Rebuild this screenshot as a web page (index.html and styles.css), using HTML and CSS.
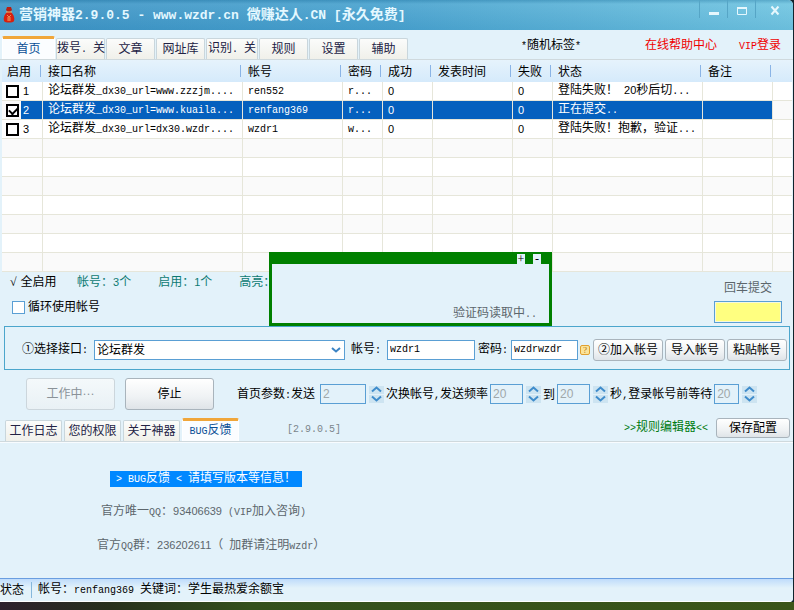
FILE: index.html
```html
<!DOCTYPE html>
<html lang="zh-CN">
  <head>
    <meta charset="UTF-8">
    <title>营销神器2.9.0.5</title>
    <link rel="stylesheet" href="styles.css">
  </head>
  <body>
    <div class="window">
      <header class="titlebar">
        <svg class="logo" width="12" height="18" viewBox="0 0 12 18">
          <path d="M4 1h4l1 3-2 2H5L3 4z" fill="#b81e12"/>
          <path d="M4 6h4c2 2 4 5 3 9-1 2-9 2-10 0-1-4 1-7 3-9z" fill="#d8200f"/>
          <path d="M3 6h6" stroke="#f0b868" stroke-width="1"/>
          <path d="M4 9l2 2 2-2M6 11v4M4 12h4M4 14h4" stroke="#f08a50" fill="none"/>
        </svg>
        <h1>营销神器<span class="mono">2.9.0.5 - www.wzdr.cn </span>微赚达人<span class="mono">.CN [</span>永久免费<span class="mono">]</span></h1>
        <div class="win-buttons">
          <button type="button" aria-label="最小化"><svg width="12" height="12" viewBox="0 0 12 12"><path d="M1 9.500h10" stroke="#e6f7fd" stroke-width="3"/></svg></button>
          <button type="button" aria-label="最大化"><svg width="12" height="12" viewBox="0 0 12 12"><path d="M1.500 3.500h9v7h-9z" fill="none" stroke="#e6f7fd"/><path d="M1 4h10" stroke="#e6f7fd" stroke-width="2"/></svg></button>
          <button type="button" aria-label="关闭"><svg width="12" height="12" viewBox="0 0 12 12"><path d="M2.500 2.500l7 8M9.500 2.500l-7 8" stroke="#e6f7fd" stroke-width="2"/></svg></button>
        </div>
      </header>

      <nav class="tabs main-tabs">
        <button type="button" class="tab active">首页</button>
        <button type="button" class="tab">拨号<span class="mono">. </span>关</button>
        <button type="button" class="tab">文章</button>
        <button type="button" class="tab">网址库</button>
        <button type="button" class="tab wide">识别<span class="mono">. </span>关</button>
        <button type="button" class="tab">规则</button>
        <button type="button" class="tab">设置</button>
        <button type="button" class="tab">辅助</button>
        <div class="top-links">
          <span class="random-tag"><span class="mono">*</span>随机标签<span class="mono">*</span></span>
          <a href="#">在线帮助中心</a>
          <a href="#"><span class="mono">VIP</span>登录</a>
        </div>
      </nav>

      <table class="accounts">
        <colgroup>
          <col class="c-on"><col class="c-api"><col class="c-user"><col class="c-pass"><col class="c-ok"><col class="c-time"><col class="c-fail"><col class="c-state"><col class="c-note"><col>
        </colgroup>
        <thead>
          <tr><th>启用</th><th>接口名称</th><th>帐号</th><th>密码</th><th>成功</th><th>发表时间</th><th>失败</th><th>状态</th><th>备注</th><th></th></tr>
        </thead>
        <tbody>
          <tr>
            <td><label><input type="checkbox"><span class="num">1</span></label></td>
            <td>论坛群发<span class="mono">_dx30_url=www.zzzjm....</span></td><td><span class="mono">ren552</span></td><td><span class="mono">r...</span></td><td><span class="num">0</span></td><td></td><td><span class="num">0</span></td><td>登陆失败！<span class="mono"> </span><span class="num">20</span>秒后切<span class="mono">...</span></td><td></td><td></td>
          </tr>
          <tr class="selected">
            <td><label><input type="checkbox" checked><span class="num">2</span></label></td>
            <td>论坛群发<span class="mono">_dx30_url=www.kuaila...</span></td><td><span class="mono">renfang369</span></td><td><span class="mono">r...</span></td><td><span class="num">0</span></td><td></td><td><span class="num">0</span></td><td>正在提交<span class="mono">..</span></td><td></td><td></td>
          </tr>
          <tr>
            <td><label><input type="checkbox"><span class="num">3</span></label></td>
            <td>论坛群发<span class="mono">_dx30_url=dx30.wzdr....</span></td><td><span class="mono">wzdr1</span></td><td><span class="mono">w...</span></td><td><span class="num">0</span></td><td></td><td><span class="num">0</span></td><td>登陆失败！抱歉，验证<span class="mono">...</span></td><td></td><td></td>
          </tr>
          <tr><td></td><td></td><td></td><td></td><td></td><td></td><td></td><td></td><td></td><td></td></tr>
          <tr><td></td><td></td><td></td><td></td><td></td><td></td><td></td><td></td><td></td><td></td></tr>
          <tr><td></td><td></td><td></td><td></td><td></td><td></td><td></td><td></td><td></td><td></td></tr>
          <tr><td></td><td></td><td></td><td></td><td></td><td></td><td></td><td></td><td></td><td></td></tr>
          <tr><td></td><td></td><td></td><td></td><td></td><td></td><td></td><td></td><td></td><td></td></tr>
          <tr><td></td><td></td><td></td><td></td><td></td><td></td><td></td><td></td><td></td><td></td></tr>
          <tr><td></td><td></td><td></td><td></td><td></td><td></td><td></td><td></td><td></td><td></td></tr>
        </tbody>
      </table>

      <section class="summary">
        <div class="summary-left">
          <div class="counts">
            <span class="all-on"><span>√</span><span>全启用</span></span>
            <span>帐号：<span class="num">3</span>个</span>
            <span>启用：<span class="num">1</span>个</span>
            <span>高亮：</span>
          </div>
          <label class="loop"><input type="checkbox">循环使用帐号</label>
        </div>
        <div class="captcha-entry">
          <label for="captcha">回车提交</label>
          <input type="text" id="captcha">
        </div>
        <div class="captcha-popup">
          <div class="popup-bar">
            <button type="button">+</button>
            <button type="button">-</button>
          </div>
          <p>验证码读取中<span class="mono">..</span></p>
        </div>
      </section>

      <form class="account-form">
        <label for="api">①选择接口<span class="mono">:</span></label>
        <div class="select-box">
          <select id="api"><option>论坛群发</option></select>
          <svg width="10" height="8" viewBox="0 0 10 8"><path d="M1 2l4 3.500 4-3.500" fill="none" stroke="#3c84c4" stroke-width="2"/></svg>
        </div>
        <label for="user">帐号<span class="mono">:</span></label>
        <input type="text" id="user" class="user" value="wzdr1">
        <label for="pass">密码<span class="mono">:</span></label>
        <input type="text" id="pass" class="pass" value="wzdrwzdr">
        <span class="help">?</span>
        <div class="form-buttons">
          <button type="button" class="btn">②加入帐号</button>
          <button type="button" class="btn">导入帐号</button>
          <button type="button" class="btn">粘贴帐号</button>
        </div>
      </form>

      <section class="controls">
        <button type="button" class="btn big" disabled>工作中···</button>
        <button type="button" class="btn big">停止</button>
        <div class="params">
          <label for="send">首页参数<span class="mono">:</span>发送</label>
          <input type="text" id="send" class="send" value="2" disabled>
          <span class="spin">
            <button type="button" aria-label="增加"><svg width="11" height="7" viewBox="0 0 11 7"><path d="M1 5.500l4.500-4 4.500 4" fill="none" stroke="#3f8ccb" stroke-width="2"/></svg></button>
            <button type="button" aria-label="减少"><svg width="11" height="7" viewBox="0 0 11 7"><path d="M1 1.500l4.500 4 4.500-4" fill="none" stroke="#3f8ccb" stroke-width="2"/></svg></button>
          </span>
          <label for="from">次换帐号<span class="mono">,</span>发送频率</label>
          <input type="text" id="from" class="rate" value="20" disabled>
          <span class="spin">
            <button type="button" aria-label="增加"><svg width="11" height="7" viewBox="0 0 11 7"><path d="M1 5.500l4.500-4 4.500 4" fill="none" stroke="#3f8ccb" stroke-width="2"/></svg></button>
            <button type="button" aria-label="减少"><svg width="11" height="7" viewBox="0 0 11 7"><path d="M1 1.500l4.500 4 4.500-4" fill="none" stroke="#3f8ccb" stroke-width="2"/></svg></button>
          </span>
          <label for="to">到</label>
          <input type="text" id="to" class="rate" value="20" disabled>
          <span class="spin">
            <button type="button" aria-label="增加"><svg width="11" height="7" viewBox="0 0 11 7"><path d="M1 5.500l4.500-4 4.500 4" fill="none" stroke="#3f8ccb" stroke-width="2"/></svg></button>
            <button type="button" aria-label="减少"><svg width="11" height="7" viewBox="0 0 11 7"><path d="M1 1.500l4.500 4 4.500-4" fill="none" stroke="#3f8ccb" stroke-width="2"/></svg></button>
          </span>
          <label for="wait">秒<span class="mono">,</span>登录帐号前等待</label>
          <input type="text" id="wait" class="wait" value="20" disabled>
          <span class="spin">
            <button type="button" aria-label="增加"><svg width="11" height="7" viewBox="0 0 11 7"><path d="M1 5.500l4.500-4 4.500 4" fill="none" stroke="#3f8ccb" stroke-width="2"/></svg></button>
            <button type="button" aria-label="减少"><svg width="11" height="7" viewBox="0 0 11 7"><path d="M1 1.500l4.500 4 4.500-4" fill="none" stroke="#3f8ccb" stroke-width="2"/></svg></button>
          </span>
        </div>
      </section>

      <nav class="tabs sub-tabs">
        <button type="button" class="tab">工作日志</button>
        <button type="button" class="tab">您的权限</button>
        <button type="button" class="tab">关于神器</button>
        <button type="button" class="tab active"><span class="mono">BUG</span>反馈</button>
        <span class="version mono">[2.9.0.5]</span>
        <div class="sub-right">
          <a href="#"><span class="mono">&gt;&gt;</span>规则编辑器<span class="mono">&lt;&lt;</span></a>
          <button type="button" class="btn save">保存配置</button>
        </div>
      </nav>

      <main class="feedback">
        <p class="notice"><a href="#"><span class="mono"> &gt; BUG</span>反馈<span class="mono"> &lt; </span>请填写版本等信息！<span class="mono"> </span></a></p>
        <p class="qq">官方唯一<span class="mono">QQ</span>：<span class="num">93406639</span><span class="mono"> (VIP</span>加入咨询<span class="mono">)</span></p>
        <p class="group">官方<span class="mono">QQ</span>群：<span class="num">236202611</span>（<span class="mono"> </span>加群请注明<span class="mono">wzdr</span>）</p>
      </main>

      <footer class="statusbar">
        <span class="state">状态</span>
        <span>帐号：<span class="mono">renfang369 </span>关键词：学生最热爱余额宝</span>
      </footer>
    </div>
  </body>
</html>
```

FILE: styles.css
```css
* {
  box-sizing: border-box;
}

body {
  margin: 0;
  padding: 0 1px 8px 0;
  min-height: 100vh;
  display: flex;
  font-family: "Liberation Serif", "Noto Sans CJK SC", sans-serif;
  font-size: 12px;
  line-height: 16px;
  color: #000;
  background: linear-gradient(to right, #2c202c, #28301c 110px, #34501c 250px, #3c5518) bottom / 100% 8px no-repeat #10232c;
}

button,
input,
select {
  font: inherit;
  color: inherit;
  margin: 0;
}

button {
  cursor: pointer;
}

p {
  margin: 0;
}

a {
  text-decoration: none;
}

/* half-width letters, 6px each */
.mono {
  font-family: "Liberation Mono", monospace;
  font-size: 10px;
  white-space: pre;
}

.num {
  font-family: "Liberation Sans", sans-serif;
  font-size: 11px;
}

.window {
  flex: 1;
  min-width: 0;
  display: flex;
  flex-direction: column;
  background: #e3f2fa;
  border-radius: 0 5px 4px 0;
  overflow: hidden;
}

/* title bar */
.titlebar {
  height: 30px;
  display: flex;
  align-items: center;
  padding-left: 3px;
  background: linear-gradient(to bottom, rgba(40, 110, 150, 0.3), rgba(255, 255, 255, 0.08) 4px, rgba(0, 60, 120, 0.06)), linear-gradient(to right, #3d94c5, #49a3cf 50%, #70c5e1);
}

.titlebar h1 {
  margin: 0 0 0 4px;
  font-size: 14px;
  line-height: 20px;
  font-weight: bold;
  color: #e4f8ff;
  white-space: nowrap;
}

.titlebar h1 .mono {
  font-size: 13px;
}

.win-buttons {
  margin-left: auto;
  align-self: flex-start;
  display: flex;
}

.win-buttons button {
  width: 28px;
  height: 18px;
  padding: 2px 0 0;
  background: none;
  border: none;
  border-left: 1px solid #56a5c6;
}

.win-buttons button:last-child {
  width: 38px;
}

.win-buttons svg {
  display: block;
  margin: 0 auto;
}

/* tabs */
.tabs {
  display: flex;
  align-items: flex-end;
  border-bottom: 1px solid #cfd9dd;
}

.tab {
  height: 21px;
  padding: 0;
  border: 1px solid #c9d6dc;
  border-bottom: none;
  border-radius: 2px 2px 0 0;
  background: linear-gradient(#fbfcfb, #f0f0ea);
  color: #222244;
  white-space: nowrap;
}

.tab.active {
  border-color: #fff;
  border-top: 3px solid #f0a63a;
  background: #fbfdff;
  color: #0a4f96;
}

.main-tabs {
  height: 30px;
  padding-left: 2px;
  gap: 1px;
}

.main-tabs .tab {
  width: 49px;
}

.main-tabs .tab.wide {
  width: 52px;
}

.main-tabs .tab.active {
  width: 53px;
  height: 23px;
}

.top-links {
  margin-left: auto;
  align-self: center;
  display: flex;
  padding: 2px 12px 0 0;
}

.top-links a {
  color: #f00000;
  margin-left: 22px;
}

.top-links .random-tag {
  margin-right: 42px;
}

/* accounts table */
.accounts {
  width: calc(100% - 3px);
  margin-left: 2px;
  table-layout: fixed;
  border-collapse: separate;
  border-spacing: 0;
  background: #fff;
}

.c-on { width: 41px; }
.c-api { width: 200px; }
.c-user { width: 100px; }
.c-pass { width: 40px; }
.c-ok { width: 50px; }
.c-time { width: 80px; }
.c-fail { width: 40px; }
.c-state { width: 150px; }
.c-note { width: 70px; }

.accounts th {
  height: 22px;
  padding: 1px 0 0 5px;
  text-align: left;
  font-weight: normal;
  white-space: nowrap;
  background: linear-gradient(to right, #8ab4e6, #8ab4e6) right 2px center / 1px 12px no-repeat, linear-gradient(#e6f3fc, #d5eafb);
}

.accounts th:last-child {
  background: linear-gradient(#e6f3fc, #d5eafb);
}

.accounts td {
  height: 19px;
  padding: 0 0 0 5px;
  line-height: 16px;
  white-space: nowrap;
  overflow: hidden;
  border-right: 1px solid #e6e6da;
  border-bottom: 1px solid #e6e6da;
}

.accounts td:last-child {
  border-right: none;
}

.accounts tr:nth-child(even) td {
  background: #fafafa;
}

.accounts tr.selected td:not(:last-child) {
  background: #0460be;
  color: #fff;
}

.accounts td:first-child {
  padding-left: 4px;
}

.accounts tr.selected td:first-child {
  background: linear-gradient(to right, #fafafa 19px, #0460be 19px);
}

.accounts label {
  display: flex;
  align-items: center;
  gap: 4px;
}

.accounts input {
  appearance: none;
  width: 13px;
  height: 13px;
  border: 2px solid #000;
  background: #fff;
}

.accounts input:checked::before {
  content: "";
  display: block;
  width: 7px;
  height: 4px;
  margin: 1px;
  border: solid #000;
  border-width: 0 0 2px 2px;
  transform: rotate(-45deg);
}

/* counters and captcha */
.summary {
  position: relative;
  display: flex;
  justify-content: space-between;
  height: 54px;
  padding: 2px 11px 0 10px;
}

.counts {
  display: flex;
  gap: 27px;
  height: 18px;
  color: #0d7a72;
}

.counts .all-on {
  display: flex;
  gap: 4px;
  width: 40px;
  color: #000;
  white-space: nowrap;
}

.loop {
  display: flex;
  align-items: center;
  gap: 3px;
  margin: 7px 0 0 2px;
}

.loop input {
  appearance: none;
  width: 13px;
  height: 13px;
  border: 1px solid #5a9fd4;
  background: #fff;
}

.captcha-entry {
  display: flex;
  flex-direction: column;
  align-items: center;
  gap: 5px;
  padding-top: 6px;
  color: #5c666c;
}

.captcha-popup {
  position: absolute;
  left: 269px;
  bottom: 0;
  width: 283px;
  height: 74px;
  display: flex;
  flex-direction: column;
  justify-content: space-between;
  border: 3px solid #008000;
  border-top: none;
  background: #e3f2fa;
  color: #5c666c;
}

.popup-bar {
  display: flex;
  justify-content: flex-end;
  gap: 8px;
  height: 12px;
  padding: 2px 8px 0 0;
  background: #008000;
}

.popup-bar button {
  width: 8px;
  height: 10px;
  padding: 0;
  border: none;
  background: #e3f2fa;
  color: #000;
  font-size: 12px;
  line-height: 10px;
}

.captcha-popup p {
  padding-right: 12px;
  text-align: right;
}

/* account form */
input[type="text"],
select {
  height: 20px;
  padding: 0 2px;
  border: 1px solid #5a9fd4;
  border-radius: 0;
  background: #fff;
}

.captcha-entry input[type="text"] {
  width: 68px;
  height: 22px;
  background: #ffff80;
  box-shadow: inset 0 0 0 1px #f4f8e0;
}

.account-form {
  display: flex;
  align-items: center;
  height: 44px;
  margin: 0 3px 0 4px;
  padding: 3px 2px 0 17px;
  border: 1px solid #4ba6cc;
  white-space: nowrap;
}

.account-form label,
.params label {
  padding-top: 1px;
}

.select-box {
  position: relative;
  flex: 1;
  margin: 0 6px;
}

.select-box select {
  display: block;
  width: 100%;
  appearance: none;
}

.select-box svg {
  position: absolute;
  right: 4px;
  top: 6px;
  pointer-events: none;
}

.account-form input[type="text"] {
  font-family: "Liberation Mono", monospace;
  font-size: 10px;
}

.account-form .user {
  width: 88px;
  margin: 0 3px 0 6px;
}

.account-form .pass {
  width: 67px;
  margin: 0 2px 0 3px;
}

.help {
  width: 10px;
  height: 10px;
  border: 1px solid #e0a030;
  border-radius: 2px;
  background: #fbe49a;
  color: #b07010;
  font-size: 9px;
  line-height: 8px;
  text-align: center;
}

.form-buttons {
  display: flex;
  gap: 2px;
  margin-left: 3px;
}

.btn {
  height: 22px;
  padding: 0 4px;
  border: 1px solid #a9b4bc;
  border-radius: 3px;
  background: linear-gradient(#fff, #eff2f4 60%, #dfe4e8);
  white-space: nowrap;
}

.form-buttons .btn {
  min-width: 60px;
}

/* start / stop and sending parameters */
.controls {
  display: flex;
  align-items: center;
  gap: 10px;
  padding: 8px 0 8px 26px;
}

.btn.big {
  width: 89px;
  height: 32px;
}

.btn:disabled {
  border-color: #ccd6dc;
  background: linear-gradient(#f4f9fb, #e9f1f5);
  color: #8a9298;
}

.params {
  display: flex;
  align-items: center;
  margin-left: 13px;
  gap: 2px;
  white-space: nowrap;
}

.params input[type="text"]:disabled {
  background: #e3f2fa;
  color: #a0a8aa;
  font-family: "Liberation Sans", sans-serif;
}

.params .send {
  width: 46px;
  margin-left: 3px;
}

.params .rate {
  width: 33px;
}

.params .wait {
  width: 25px;
}

.spin {
  display: flex;
  flex-direction: column;
  gap: 1px;
  margin-left: 1px;
}

.spin button {
  display: flex;
  align-items: center;
  justify-content: center;
  width: 15px;
  height: 8px;
  padding: 0;
  border: none;
  background: #cde4f1;
}

/* lower tabs */
.sub-tabs {
  height: 24px;
  padding: 0 3px 0 5px;
  gap: 2px;
}

.sub-tabs .tab {
  width: 57px;
}

.sub-tabs .tab.active {
  height: 23px;
}

.version {
  align-self: center;
  margin-left: 46px;
  color: #7c868c;
}

.sub-right {
  margin-left: auto;
  align-self: flex-start;
  display: flex;
  align-items: center;
  gap: 8px;
}

.sub-right a {
  color: #007a10;
}

.btn.save {
  width: 74px;
  height: 20px;
}

.feedback {
  flex: 1;
  padding: 28px 0 20px 97px;
  border-top: 1px solid #f8fcff;
  color: #5c666c;
}

.notice {
  margin-left: 13px;
  line-height: 14px;
}

.notice a {
  display: inline-block;
  background: #0088ff;
  color: #fff;
}

.qq {
  margin: 16px 0 16px 4px;
}

.statusbar {
  display: flex;
  align-items: center;
  height: 24px;
  border-top: 1px solid #6a9ee0;
  border-bottom: 1px solid #fff;
  background: linear-gradient(#bfdcfb, #e3f2fa 9px);
}

.statusbar .state {
  width: 32px;
  margin-right: 6px;
  border-right: 1px solid #86b8dc;
}
```
